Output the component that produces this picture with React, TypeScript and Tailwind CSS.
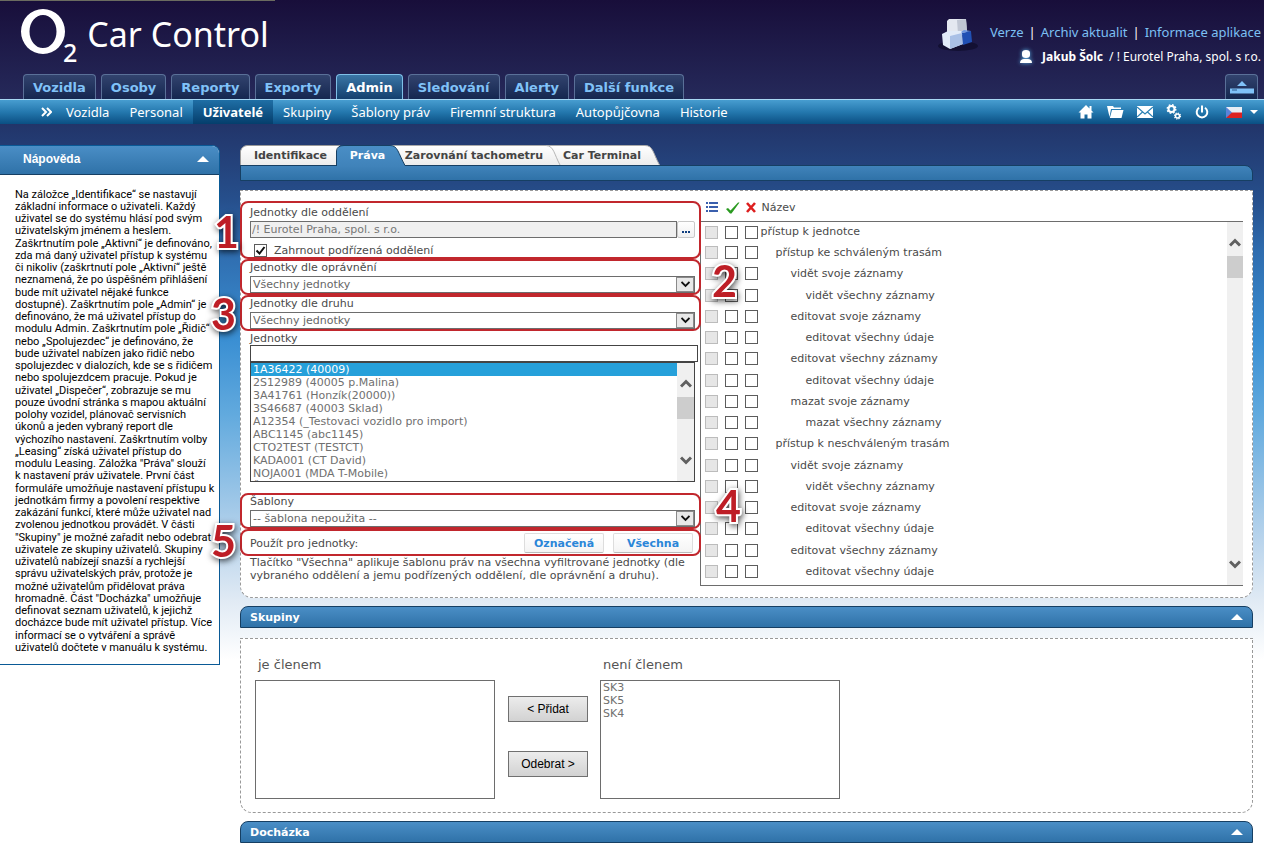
import { useState, type ReactNode } from 'react';
import { clsx } from 'clsx';

const MODULES = ['Vozidla', 'Osoby', 'Reporty', 'Exporty', 'Admin', 'Sledování', 'Alerty', 'Další funkce'];

const PAGES = [
  'Vozidla',
  'Personal',
  'Uživatelé',
  'Skupiny',
  'Šablony práv',
  'Firemní struktura',
  'Autopůjčovna',
  'Historie',
];

const HELP_LINES = [
  'Na záložce „Identifikace“ se nastavují',
  'základní informace o uživateli. Každý',
  'uživatel se do systému hlásí pod svým',
  'uživatelským jménem a heslem.',
  'Zaškrtnutím pole „Aktivní“ je definováno,',
  'zda má daný uživatel přístup k systému',
  'či nikoliv (zaškrtnutí pole „Aktivní“ ještě',
  'neznamená, že po úspěšném přihlášení',
  'bude mít uživatel nějaké funkce',
  'dostupné). Zaškrtnutím pole „Admin“ je',
  'definováno, že má uživatel přístup do',
  'modulu Admin. Zaškrtnutím pole „Řidič“',
  'nebo „Spolujezdec“ je definováno, že',
  'bude uživatel nabízen jako řidič nebo',
  'spolujezdec v dialozích, kde se s řidičem',
  'nebo spolujezdcem pracuje. Pokud je',
  'uživatel „Dispečer“, zobrazuje se mu',
  'pouze úvodní stránka s mapou aktuální',
  'polohy vozidel, plánovač servisních',
  'úkonů a jeden vybraný report dle',
  'výchozího nastavení. Zaškrtnutím volby',
  '„Leasing“ získá uživatel přístup do',
  'modulu Leasing. Záložka "Práva" slouží',
  'k nastavení práv uživatele. První část',
  'formuláře umožňuje nastavení přístupu k',
  'jednotkám firmy a povolení respektive',
  'zakázání funkcí, které může uživatel nad',
  'zvolenou jednotkou provádět. V části',
  '"Skupiny" je možné zařadit nebo odebrat',
  'uživatele ze skupiny uživatelů. Skupiny',
  'uživatelů nabízejí snazší a rychlejší',
  'správu uživatelských práv, protože je',
  'možné uživatelům přidělovat práva',
  'hromadně. Část "Docházka" umožňuje',
  'definovat seznam uživatelů, k jejichž',
  'docházce bude mít uživatel přístup. Více',
  'informací se o vytváření a správě',
  'uživatelů dočtete v manuálu k systému.',
];

const UNITS = [
  '1A36422 (40009)',
  '2S12989 (40005 p.Malina)',
  '3A41761 (Honzík(20000))',
  '3S46687 (40003 Sklad)',
  'A12354 (_Testovaci vozidlo pro import)',
  'ABC1145 (abc1145)',
  'CTO2TEST (TESTCT)',
  'KADA001 (CT David)',
  'NOJA001 (MDA T-Mobile)',
  'ŠKODA01 (Servis)',
];

const RIGHTS: { name: string; level: number }[] = [
  { name: 'přístup k jednotce', level: 0 },
  { name: 'přístup ke schváleným trasám', level: 1 },
  { name: 'vidět svoje záznamy', level: 2 },
  { name: 'vidět všechny záznamy', level: 3 },
  { name: 'editovat svoje záznamy', level: 2 },
  { name: 'editovat všechny údaje', level: 3 },
  { name: 'editovat všechny záznamy', level: 2 },
  { name: 'editovat všechny údaje', level: 3 },
  { name: 'mazat svoje záznamy', level: 2 },
  { name: 'mazat všechny záznamy', level: 3 },
  { name: 'přístup k neschváleným trasám', level: 1 },
  { name: 'vidět svoje záznamy', level: 2 },
  { name: 'vidět všechny záznamy', level: 3 },
  { name: 'editovat svoje záznamy', level: 2 },
  { name: 'editovat všechny údaje', level: 3 },
  { name: 'editovat všechny záznamy', level: 2 },
  { name: 'editovat všechny údaje', level: 3 },
];

const INDENT = ['pl-0', 'pl-[15px]', 'pl-[30px]', 'pl-[45px]'];

function BoxesIcon() {
  return (
    <svg width="40" height="34" viewBox="0 0 40 34" aria-hidden="true">
      <ellipse cx="20" cy="28" rx="20" ry="5" fill="#0c0a24" opacity="0.6" />
      <path d="M9 3 L11 1 H28 L29 15 L27 17 H9 Z" fill="#e4e8f0" />
      <path d="M19 2 L28 1 L29 14 L20 16 Z" fill="#c0c6d3" />
      <path d="M4 16 L10 13 H24 L25 26 L12 31 L5 27 Z" fill="#e2ebf8" />
      <path d="M12 18 L24 15 L25 26 L12 31 Z" fill="#a9c0e6" />
      <path d="M24 15 L33 13 L34 24 L25 27 Z" fill="#2050b4" />
      <path d="M23 14 L26 12 L33 13 L24 15 Z" fill="#6c96e0" />
    </svg>
  );
}

function UserIcon() {
  return (
    <svg width="16" height="18" viewBox="0 0 16 18" className="drop-shadow-[0_0_2px_#5ab4e8]" aria-hidden="true">
      <path d="M4 5 Q4 2 8 2 Q12 2 12 5 V7 Q12 10 8 10 Q4 10 4 7 Z" fill="#fff" />
      <path d="M2 15 C2 12 4 11 6 11 H10 C12 11 14 12 14 15 Z" fill="#fff" />
    </svg>
  );
}

function HomeIcon() {
  return (
    <svg width="16" height="14" viewBox="0 0 16 14" fill="#fff" aria-hidden="true">
      <path d="M8 0 L0.500 7.500 H2.500 V13.500 H6.500 V9.500 H9.500 V13.500 H13.500 V7.500 H15.500 L13.500 5.500 V1 H11.500 V3.500 Z" />
    </svg>
  );
}

function FolderIcon() {
  return (
    <svg width="17" height="14" viewBox="0 0 17 14" fill="#fff" aria-hidden="true">
      <path d="M0 1 H6 L7 2.500 H14 V4 H4 L2.500 12 Z" />
      <path d="M5 5 H16.500 L14.500 13 H2.800 Z" />
    </svg>
  );
}

function MailIcon() {
  return (
    <svg width="16" height="12" viewBox="0 0 16 12" aria-hidden="true">
      <rect width="16" height="12" fill="#fff" />
      <path d="M0 1 L8 8 L16 1 M0 11 L5.500 6 M16 11 L10.500 6" fill="none" stroke="#2a80b4" strokeWidth="1.2" />
    </svg>
  );
}

function GearsIcon() {
  return (
    <svg width="16" height="16" viewBox="0 0 16 16" fill="none" stroke="#fff" aria-hidden="true">
      <circle cx="5.500" cy="5" r="3" strokeWidth="2" />
      <circle cx="5.500" cy="5" r="4.300" strokeWidth="1.400" strokeDasharray="1.700 1.680" />
      <circle cx="11.500" cy="12" r="2" strokeWidth="1.500" />
      <circle cx="11.500" cy="12" r="3" strokeWidth="1.200" strokeDasharray="1.200 1.156" />
    </svg>
  );
}

function PowerIcon() {
  return (
    <svg width="14" height="14" viewBox="0 0 14 14" fill="none" stroke="#fff" strokeWidth="2" aria-hidden="true">
      <path d="M4 2.800 A5.300 5.300 0 1 0 10 2.800" />
      <path d="M7 0.500 V7.500" />
    </svg>
  );
}

function FlagIcon() {
  return (
    <svg width="16" height="11" viewBox="0 0 16 11" aria-hidden="true">
      <rect width="16" height="11" fill="#e9eef5" />
      <rect y="5.500" width="16" height="5.500" fill="#dd2222" />
      <path d="M0 0 L6 5.500 L0 11 Z" fill="#5a84d8" />
    </svg>
  );
}

function Chevron({ up, className }: { up?: boolean; className?: string }) {
  return (
    <svg width="12" height="10" viewBox="0 0 12 10" className={className} aria-hidden="true">
      <path d={up ? 'M1 7.500 L6 2.500 L11 7.500' : 'M1 2.500 L6 7.500 L11 2.500'} fill="none" stroke="#606060" strokeWidth="3" />
    </svg>
  );
}

function UpTriangle() {
  return (
    <svg width="12" height="6" viewBox="0 0 12 6" aria-hidden="true">
      <path d="M6 0 L12 6 H0 Z" fill="#fff" />
    </svg>
  );
}

function Marker({ children, className }: { children: ReactNode; className: string }) {
  return (
    <span
      className={clsx(
        "pointer-events-none absolute z-10 font-['Lato'] text-[43px] leading-[42px] font-bold text-[#be1e26]",
        '[-webkit-text-stroke:4px_white] [paint-order:stroke_fill] drop-shadow-[1px_2px_3px_#000000b0]',
        className
      )}
    >
      {children}
    </span>
  );
}

function Dropdown({ id, label, value }: { id: string; label: string; value: string }) {
  return (
    <div className="px-2 pr-1">
      <label htmlFor={id} className="block">
        {label}
      </label>
      <div className="relative mt-0.5">
        <select
          id={id}
          className="block h-[17px] w-full appearance-none border border-[#6d6d6d] bg-white px-0.5 text-[#666]"
        >
          <option>{value}</option>
        </select>
        <span className="pointer-events-none absolute inset-y-px right-px flex w-[18px] items-center justify-center border border-[#8a8a8a] bg-[#e8e8e8]">
          <svg width="9" height="7" viewBox="0 0 9 7" aria-hidden="true">
            <path d="M0.500 1 L4.500 5 L8.500 1" fill="none" stroke="#111" strokeWidth="1.800" />
          </svg>
        </span>
      </div>
    </div>
  );
}

function SectionHeader({ title }: { title: string }) {
  return (
    <button
      type="button"
      className="flex h-[22px] w-full items-center justify-between rounded-t-lg border border-[#163f63] bg-linear-to-b from-[#4a8ec6] to-[#2f72a8] px-[9px] font-bold text-white"
    >
      {title}
      <UpTriangle />
    </button>
  );
}

const TICK =
  "size-[13px] appearance-none border border-[#5c5c5c] bg-white align-middle disabled:border-[#bcbcbc] disabled:bg-[#e6e6e6]";

function RightsTable() {
  return (
    <div className="mr-[9px] flex min-w-0 flex-1 self-start">
      <table className="w-full flex-1 border-collapse self-start">
        <thead>
          <tr className="h-[30px] border-b border-[#6d6d6d] text-left">
            <th className="w-5 pt-1 pl-[5px]">
              <svg width="12" height="11" viewBox="0 0 12 11" fill="#3a5fad" aria-label="Zděděno">
                <path d="M0 0h2v2H0z M3 0h9v2H3z M0 4h2v2H0z M3 4h9v2H3z M0 8h2v2H0z M3 8h9v2H3z" />
              </svg>
            </th>
            <th className="w-5 pt-1 pl-[5px]">
              <svg width="14" height="12" viewBox="0 0 14 12" aria-label="Povoleno">
                <path d="M0 7 L2 6 L4.500 8.500 L12 0.500 H13.500 L5.500 11.500 H4 Z" fill="#2a9a20" />
              </svg>
            </th>
            <th className="w-5 pt-1 pl-[5px]">
              <svg width="10" height="11" viewBox="0 0 10 11" aria-label="Zakázáno">
                <path d="M1 1 L9 10 M9 1 L1 10" fill="none" stroke="#dd1f1f" strokeWidth="2.600" />
              </svg>
            </th>
            <th className="pt-[3px] pl-px font-normal">Název</th>
          </tr>
        </thead>
        <tbody className="border-l border-[#6d6d6d]">
          {RIGHTS.map((right, i) => (
            <tr key={i} className="h-[21px] leading-[13px] nth-[4n]:h-[22px]">
              <td className="pl-1">
                <input type="checkbox" disabled aria-label={`Zděděno: ${right.name}`} className={TICK} />
              </td>
              <td className="pl-1">
                <input type="checkbox" aria-label={`Povoleno: ${right.name}`} className={TICK} />
              </td>
              <td className="pl-1">
                <input type="checkbox" aria-label={`Zakázáno: ${right.name}`} className={TICK} />
              </td>
              <td className={INDENT[right.level]}>{right.name}</td>
            </tr>
          ))}
          <tr className="h-[3px] border-b border-[#6d6d6d]">
            <td colSpan={4} />
          </tr>
        </tbody>
      </table>
      <div className="mt-[30px] flex w-4 flex-col items-center border-y border-[#6d6d6d] bg-[#f0f0f0] pt-4 pb-4">
        <Chevron up />
        <span className="mt-2 h-[22px] w-full bg-[#cdcdcd]" />
        <Chevron className="mt-auto" />
      </div>
    </div>
  );
}

function UnitsForm() {
  const [selected, setSelected] = useState(UNITS[0]);

  return (
    <div className="relative -mx-px w-[461px] shrink-0 pt-2.5 pb-[15px] leading-[13px]">
      <Marker className="top-[20px] left-[-26px]">1</Marker>
      <Marker className="top-[69px] left-[472px]">2</Marker>
      <Marker className="top-[102px] left-[-29px]">3</Marker>
      <Marker className="top-[294px] left-[476px]">4</Marker>
      <Marker className="top-[329px] left-[-29px]">5</Marker>

      <div className="rounded-lg border-2 border-[#c1272d] pt-[3px] pr-1 pl-2">
        <label htmlFor="department" className="block">
          Jednotky dle oddělení
        </label>
        <div className="mt-0.5 flex h-[17px]">
          <input
            id="department"
            readOnly
            value="/! Eurotel Praha, spol. s r.o."
            className="min-w-0 flex-1 border border-[#6d6d6d] bg-[#f0f0f0] px-px text-[#777]"
          />
          <button
            type="button"
            aria-label="Vybrat oddělení"
            className="flex w-[18px] items-center justify-center gap-px rounded-xs border border-[#c8c8c8] bg-linear-to-b from-white to-[#f0f0f0] pt-1"
          >
            <i className="size-0.5 bg-[#103f80]" />
            <i className="size-0.5 bg-[#103f80]" />
            <i className="size-0.5 bg-[#103f80]" />
          </button>
        </div>
        <label className="mt-1.5 flex items-center pl-1">
          <span className="relative size-[13px]">
            <input type="checkbox" defaultChecked className="peer block size-[13px] appearance-none border border-[#5c5c5c] bg-white" />
            <svg
              width="13"
              height="13"
              viewBox="0 0 13 13"
              className="pointer-events-none absolute inset-0 hidden peer-checked:block"
              aria-hidden="true"
            >
              <path d="M2.500 6.500 L5.500 9.500 L10.500 3" fill="none" stroke="#111" strokeWidth="2" />
            </svg>
          </span>
          <span className="ml-[7px]">Zahrnout podřízená oddělení</span>
        </label>
      </div>
      <div className="rounded-lg border-2 border-[#c1272d]">
        <Dropdown id="permission" label="Jednotky dle oprávnění" value="Všechny jednotky" />
      </div>
      <div className="rounded-lg border-2 border-[#c1272d]">
        <Dropdown id="kind" label="Jednotky dle druhu" value="Všechny jednotky" />
      </div>

      <div className="mt-px mb-[11px] pr-[3px] pl-2.5">
        <label htmlFor="unit-filter" className="block">
          Jednotky
        </label>
        <input id="unit-filter" className="block h-[17px] w-full border border-[#444] bg-white px-1" />
        <div className="mr-[3px] flex h-[120px] border border-[#444]">
          <select
            size={9}
            aria-label="Jednotky"
            value={selected}
            onChange={(e) => setSelected(e.target.value)}
            className="min-w-0 flex-1 overflow-hidden bg-white text-[#707070] [scrollbar-width:none]"
          >
            {UNITS.map((unit) => (
              <option
                key={unit}
                className="h-[13px] min-h-0 px-0.5 py-0 checked:bg-linear-to-b checked:from-[#26a0da] checked:to-[#26a0da] checked:[-webkit-text-fill-color:white]"
              >
                {unit}
              </option>
            ))}
          </select>
          <div className="flex w-[17px] flex-col items-center bg-[#f0f0f0] py-4">
            <Chevron up />
            <span className="mt-2 h-[22px] w-full bg-[#cdcdcd]" />
            <Chevron className="mt-auto" />
          </div>
        </div>
      </div>

      <div className="rounded-lg border-2 border-[#c1272d]">
        <Dropdown id="template" label="Šablony" value="-- šablona nepoužita --" />
      </div>
      <div className="flex items-center gap-[9px] rounded-lg border-2 border-[#c1272d] pt-0.5 pr-1.5 pb-px pl-2">
        <span className="mr-auto">Použít pro jednotky:</span>
        {['Označená', 'Všechna'].map((name) => (
          <button
            key={name}
            type="button"
            className="h-5 w-20 rounded-xs border border-[#ddd] border-b-[#bbb] bg-linear-to-b from-white to-[#f4f4f4] font-bold text-[#2a86d8]"
          >
            {name}
          </button>
        ))}
      </div>
      <p className="pl-2.5">
        Tlačítko "Všechna" aplikuje šablonu práv na všechna vyfiltrované jednotky (dle vybraného oddělení a jemu
        podřízených oddělení, dle oprávnění a druhu).
      </p>
    </div>
  );
}

function DetailTabs() {
  return (
    <div>
      <div className="relative flex h-5 w-[420px] items-center font-bold text-[#444]">
        {/* Slanted tab outlines, the active one runs into the bar below */}
        <svg className="absolute inset-0 overflow-visible" width="420" height="20" viewBox="0 0 420 20" aria-hidden="true">
          <defs>
            <linearGradient id="tab-light" x1="0" y1="0" x2="0" y2="1">
              <stop offset="0" stopColor="#fff" />
              <stop offset="1" stopColor="#ececec" />
            </linearGradient>
            <linearGradient id="tab-active" x1="0" y1="0" x2="0" y2="1">
              <stop offset="0" stopColor="#4a8ec6" />
              <stop offset="1" stopColor="#4083ba" />
            </linearGradient>
          </defs>
          <path d="M0.500 20 V6 Q2 1 7 0.500 H100 V20" fill="url(#tab-light)" stroke="#999" />
          <path d="M150 0.500 H405 C413 0.500 413 8 419.500 20 H150" fill="url(#tab-light)" />
          <path d="M150 0.500 H405 C413 0.500 413 8 419.500 20" fill="none" stroke="#aaa" />
          <path d="M306 0.500 C314 1 314 9 320 20" fill="none" stroke="#b5b5b5" />
          <path d="M97 21 V6 Q97 0.500 104 0.500 H150 C158 0.500 158 8 165 20.500 V21 Z" fill="url(#tab-active)" />
          <path d="M96.500 20.500 V6 Q97 0.500 104 0.500 H150 C158 0.500 158 8 165 20.500" fill="none" stroke="#163f63" />
        </svg>
        <button type="button" className="relative w-[97px] pl-1">Identifikace</button>
        <button type="button" className="relative w-[61px] text-white">Práva</button>
        <button type="button" className="relative w-[152px]">Zarovnání tachometru</button>
        <button type="button" className="relative w-[104px]">Car Terminal</button>
      </div>
      <div className="h-4 rounded-tr-lg border border-[#163f63] bg-linear-to-b from-[#4083ba] to-[#2f72a8]" />
    </div>
  );
}

function Groups() {
  return (
    <div className="mt-2.5 flex rounded-b-xl border border-dashed border-[#999] bg-white pt-[19px] pb-[13px] pl-3.5 text-[#707070]">
      <div className="w-60">
        <label htmlFor="member" className="block pl-[3px] text-[13px] leading-[13px] text-[#555]">je členem</label>
        <select id="member" size={9} className="mt-[9px] block h-[119px] w-full border border-[#6d6d6d] bg-white [scrollbar-width:none]" />
      </div>
      <div className="mr-3 ml-[13px] flex w-20 flex-col gap-[29px] pt-[38px] font-['Liberation_Sans'] text-[12px] text-black *:h-[26px] *:border *:border-[#707070] *:bg-linear-to-b *:from-[#ececec] *:to-[#d2d2d2]">
        <button type="button">&lt; Přidat</button>
        <button type="button">Odebrat &gt;</button>
      </div>
      <div className="w-60">
        <label htmlFor="non-member" className="block pl-[3px] text-[13px] leading-[13px] text-[#555]">není členem</label>
        <select id="non-member" size={9} className="mt-[9px] block h-[119px] w-full border border-[#6d6d6d] bg-white [scrollbar-width:none]">
          {['SK3', 'SK5', 'SK4'].map((group) => (
            <option key={group} className="h-[13px] min-h-0 px-0.5 py-0">{group}</option>
          ))}
        </select>
      </div>
    </div>
  );
}

export default function App() {
  return (
    <div className="min-h-screen bg-white bg-[linear-gradient(#180e3a_0px,#25295a_98px,#22356a_125px,#264f8c_200px,#2f6cae_250px,#3a8fd3_340px,#62aade_415px,#b9d4ec_540px,#e0eaf4_600px,#fff_660px)] pb-1 font-['DejaVu_Sans',sans-serif] text-[11px] leading-[13px] text-[#4a4a4a]">
      <div className="h-px w-[275px] bg-[#6b6b60]" />

      <header>
        <div className="flex h-[73px] justify-between">
          <h1 className="flex items-start pt-2 pl-[21px] font-['Noto_Sans'] text-white">
            {/* Logo ring */}
            <svg width="44" height="45" viewBox="0 0 44 45" aria-label="O" role="img">
              <path
                fillRule="evenodd"
                fill="#fff"
                d="M22 0 A22 22.500 0 1 0 22 45 A22 22.500 0 1 0 22 0 Z M22 6 A13.500 16.500 0 1 1 22 39 A13.500 16.500 0 1 1 22 6 Z"
              />
            </svg>
            <sub className="bottom-auto -ml-0.5 pt-[26px] text-[25px] leading-[34px] font-medium">2</sub>
            <span className="pl-2.5 text-[34px] leading-[50px]">Car Control</span>
          </h1>
          <div className="flex pt-[17px] pr-[3px]">
            <BoxesIcon />
            <div className="flex flex-col items-end pl-3 font-['Noto_Sans'] text-white">
              <p className="flex gap-[5px] pt-1 text-[13px] leading-[20px]">
                <a href="#verze" className="text-[#7cc0f4]">Verze</a>|
                <a href="#archiv" className="text-[#7cc0f4]">Archiv aktualit</a>|
                <a href="#info" className="text-[#7cc0f4]">Informace aplikace</a>
              </p>
              <p className="flex items-center pt-1.5 text-[12px] leading-[18px]">
                <UserIcon />
                <b className="mr-1.5 ml-2">Jakub Šolc</b> / ! Eurotel Praha, spol. s r.o.
              </p>
            </div>
          </div>
        </div>

        <div className="flex h-[25px] gap-[5px] pr-1.5 pl-[23px]">
          {MODULES.map((name) => (
            <a
              key={name}
              href="#modul"
              className={clsx(
                'rounded-t-sm border border-b-0 bg-linear-to-b px-[9px] text-[13px] leading-[25px] font-bold',
                name === 'Admin'
                  ? 'border-[#7fc0e8] from-[#3a76a6] to-[#14406e] text-white'
                  : 'border-[#5a7098] from-[#32436e] to-[#152750] text-[#80c2f8]'
              )}
            >
              {name}
            </a>
          ))}
          <button
            type="button"
            aria-label="Skrýt záhlaví"
            className="ml-auto flex w-[33px] items-center justify-center rounded-t-sm border border-b-0 border-[#5a7098] bg-linear-to-b from-[#32436e] to-[#152750]"
          >
            <svg width="24" height="14" viewBox="0 0 24 14" aria-hidden="true">
              <path d="M12 1 L17 6 H7 Z M0 8.500 H24 V13.500 H0 Z" fill="#80c2f8" />
              <path d="M2 10 H7" stroke="#2a5a90" />
            </svg>
          </button>
        </div>

        <nav className="flex h-[25px] items-stretch border-t border-[#a8d8f4] bg-linear-to-b from-[#479dd0] via-[#2478ae] to-[#0a4f83] font-['Noto_Sans'] text-[13px] leading-[24px] text-white">
          <svg width="11" height="10" viewBox="0 0 11 10" className="mr-1 ml-[41px] self-center" aria-hidden="true">
            <path d="M1 1 L5 5 L1 9 M6 1 L10 5 L6 9" fill="none" stroke="#fff" strokeWidth="2" />
          </svg>
          {PAGES.map((name) => (
            <a
              key={name}
              href="#stranka"
              className={clsx('px-2.5', name === 'Uživatelé' && 'bg-linear-to-b from-[#1f6fa6] to-[#053e6c] font-bold')}
            >
              {name}
            </a>
          ))}
          <div className="ml-auto flex items-center gap-[13px] pr-1.5">
            <button type="button" aria-label="Domů"><HomeIcon /></button>
            <button type="button" aria-label="Dokumenty"><FolderIcon /></button>
            <button type="button" aria-label="Zprávy"><MailIcon /></button>
            <button type="button" aria-label="Nastavení"><GearsIcon /></button>
            <button type="button" aria-label="Odhlásit"><PowerIcon /></button>
            <button type="button" aria-label="Jazyk" className="ml-1 flex items-center gap-2">
              <FlagIcon />
              <svg width="8" height="4" viewBox="0 0 8 4" aria-hidden="true">
                <path d="M0 0 H8 L4 4 Z" fill="#fff" />
              </svg>
            </button>
          </div>
        </nav>
      </header>

      <div className="mt-[21px] flex items-start gap-5">
        <aside className="w-[220px] shrink-0 overflow-hidden rounded-tr-lg border border-l-0 border-[#0a5a96] bg-white font-['Liberation_Sans',sans-serif]">
          <button
            type="button"
            className="flex h-[29px] w-full items-center justify-between border-b border-[#163f63] bg-linear-to-b from-[#4a8ec6] to-[#2f72a8] pr-2.5 pb-0.5 pl-[23px] text-[12px] font-bold text-white"
          >
            Nápověda
            <UpTriangle />
          </button>
          <p className="pt-3.5 pb-2.5 pl-[15px] font-['Roboto'] whitespace-nowrap text-black">
            {HELP_LINES.map((line) => (
              <span key={line} className="block leading-[12px] nth-[4n]:mb-px">
                {line}
              </span>
            ))}
          </p>
        </aside>

        <main className="mr-[11px] min-w-0 flex-1">
          <DetailTabs />
          <div className="mt-[9px] flex rounded-b-xl border border-dashed border-[#999] bg-white">
            <UnitsForm />
            <RightsTable />
          </div>
          <div className="mt-2">
            <SectionHeader title="Skupiny" />
          </div>
          <Groups />
          <div className="mt-2">
            <SectionHeader title="Docházka" />
          </div>
        </main>
      </div>
    </div>
  );
}
